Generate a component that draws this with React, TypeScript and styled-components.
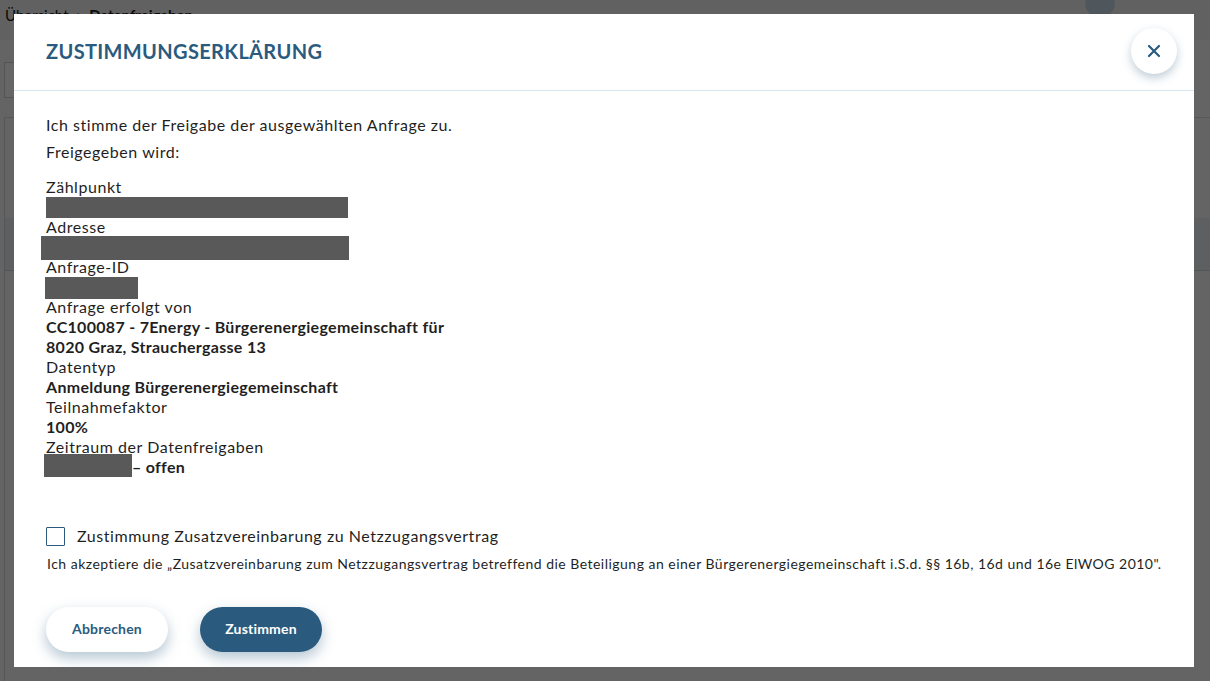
import React from "react";
import styled, { createGlobalStyle } from "styled-components";

const GlobalStyle = createGlobalStyle`
  html, body { margin: 0; padding: 0; }
  body {
    font-family: Lato, "Open Sans", "Liberation Sans", sans-serif;
    color: #1f1f1f;
    background: #ffffff;
    width: 1210px;
    height: 681px;
    overflow: hidden;
  }
  * { box-sizing: border-box; }
`;

const brand = "#2a5b7e";

/* ---------- background page ---------- */
const Page = styled.div`
  width: 1210px;
  height: 681px;
  display: flex;
  flex-direction: column;
  background: #fbfbfb;
`;

const TopBar = styled.header`
  height: 40px;
  flex: none;
  display: flex;
  align-items: flex-start;
  justify-content: space-between;
  padding: 4px 20px 0 5px;
  background: #f3f3f3;
`;

const Crumbs = styled.nav`
  display: flex;
  align-items: center;
  gap: 8px;
  font-size: 15px;
  color: #1a1a1a;
`;

const Crumb = styled.span<{ $current?: boolean }>`
  font-weight: ${(p) => (p.$current ? 700 : 400)};
`;

const Chevron = styled.span`
  color: ${brand};
  font-size: 17px;
`;

const Avatar = styled.div`
  width: 30px;
  height: 30px;
  border-radius: 50%;
  background: #c9d9e6;
  margin: -16px 75px 0 0;
`;

const PageBody = styled.main`
  flex: 1;
  display: flex;
  flex-direction: column;
  padding: 22px 0 0 4px;
`;

const FilterBox = styled.div`
  width: 300px;
  height: 36px;
  border: 1px solid #cfcfcf;
  background: #fff;
`;

const Divider = styled.div`
  height: 1px;
  background: #dcdcdc;
  margin-top: 19px;
`;

const TableArea = styled.div`
  flex: 1;
  border-left: 1px solid #d8d8d8;
  display: flex;
  flex-direction: column;
  padding-top: 100px;
`;

const TableHead = styled.div`
  height: 53px;
  background: #e9eef2;
  border-bottom: 1px solid #d0d6da;
`;

/* ---------- modal ---------- */
const Overlay = styled.div`
  position: fixed;
  inset: 0;
  background: rgba(0, 0, 0, 0.6);
  display: flex;
  padding: 14px 16px 14px 14px;
`;

const Modal = styled.section`
  flex: 1;
  background: #ffffff;
  display: flex;
  flex-direction: column;
  overflow: hidden;
`;

const Header = styled.div`
  flex: none;
  height: 77px;
  border-bottom: 1px solid #d6e4ed;
  display: flex;
  align-items: center;
  justify-content: space-between;
  padding: 0 17px 3px 32px;
`;

const Title = styled.h2`
  margin: 0;
  font-size: 20px;
  font-weight: 700;
  color: ${brand};
  letter-spacing: 0.35px;
`;

const CloseButton = styled.button`
  width: 46px;
  height: 46px;
  border-radius: 50%;
  border: none;
  background: #fff;
  box-shadow: 0 4px 10px rgba(42, 91, 126, 0.3);
  display: flex;
  align-items: center;
  justify-content: center;
  padding: 0;
  cursor: pointer;
`;

const Body = styled.div`
  flex: 1;
  min-height: 0;
  display: flex;
  flex-direction: column;
  padding: 20px 30px 15px 32px;
  letter-spacing: 0.55px;
`;

const Intro = styled.p`
  margin: 0;
  font-size: 16px;
  line-height: 27px;
`;

const Details = styled.div`
  margin-top: 12px;
  display: flex;
  flex-direction: column;
  font-size: 16px;
  line-height: 20px;
`;

const Label = styled.div``;

const Value = styled.div`
  font-weight: 700;
  letter-spacing: 0.3px;
  display: flex;
  align-items: center;
`;

const Redaction = styled.span<{ $w: number; $h: number; $dx?: number; $dy?: number }>`
  display: block;
  flex: none;
  background: #595959;
  width: ${(p) => p.$w}px;
  height: ${(p) => p.$h}px;
  margin-left: ${(p) => p.$dx ?? 0}px;
  margin-top: ${(p) => p.$dy ?? 0}px;
  margin-bottom: ${(p) => 20 - p.$h - (p.$dy ?? 0)}px;
`;

const CheckRow = styled.label`
  margin-top: 49px;
  display: flex;
  align-items: center;
  gap: 12px;
  font-size: 16px;
  line-height: 20px;
  cursor: pointer;
`;

const CheckBox = styled.span`
  width: 19px;
  height: 19px;
  border: 1.5px solid ${brand};
  border-radius: 1px;
  background: #fff;
`;

const Accept = styled.p`
  margin: 8px 0 0 1px;
  font-size: 14px;
  line-height: 20px;
  letter-spacing: 0.48px;
  white-space: nowrap;
`;

const Actions = styled.div`
  margin-top: 33px;
  display: flex;
  gap: 32px;
`;

const Button = styled.button<{ $primary?: boolean }>`
  width: 122px;
  height: 45px;
  border-radius: 23px;
  border: none;
  padding: 0 0 3px;
  font-family: inherit;
  font-size: 14px;
  font-weight: 700;
  letter-spacing: 0.2px;
  cursor: pointer;
  color: ${(p) => (p.$primary ? "#ffffff" : brand)};
  background: ${(p) => (p.$primary ? brand : "#ffffff")};
  box-shadow: 0 6px 14px rgba(42, 91, 126, 0.35);
`;

const CloseIcon = () => (
  <svg width="14" height="14" viewBox="0 0 14 14" fill="none">
    <path d="M2 2L12 12M12 2L2 12" stroke={brand} strokeWidth="2.2" strokeLinecap="round" />
  </svg>
);

export default function App() {
  return (
    <>
      <GlobalStyle />
      <Page>
        <TopBar>
          <Crumbs>
            <Crumb>Übersicht</Crumb>
            <Chevron>›</Chevron>
            <Crumb $current>Datenfreigaben</Crumb>
          </Crumbs>
          <Avatar />
        </TopBar>
        <PageBody>
          <FilterBox />
          <Divider />
          <TableArea>
            <TableHead />
          </TableArea>
        </PageBody>
      </Page>
      <Overlay>
        <Modal role="dialog" aria-modal="true">
          <Header>
            <Title>ZUSTIMMUNGSERKLÄRUNG</Title>
            <CloseButton aria-label="Schließen">
              <CloseIcon />
            </CloseButton>
          </Header>
          <Body>
            <Intro>Ich stimme der Freigabe der ausgewählten Anfrage zu.</Intro>
            <Intro>Freigegeben wird:</Intro>
            <Details>
              <Label>Zählpunkt</Label>
              <Redaction $w={302} $h={21} />
              <Label>Adresse</Label>
              <Redaction $w={308} $h={24} $dx={-5} $dy={-1} />
              <Label>Anfrage-ID</Label>
              <Redaction $w={93} $h={22} $dx={-1} />
              <Label>Anfrage erfolgt von</Label>
              <Value>CC100087 - 7Energy - Bürgerenergiegemeinschaft für</Value>
              <Value>8020 Graz, Strauchergasse 13</Value>
              <Label>Datentyp</Label>
              <Value>Anmeldung Bürgerenergiegemeinschaft</Value>
              <Label>Teilnahmefaktor</Label>
              <Value>100%</Value>
              <Label>Zeitraum der Datenfreigaben</Label>
              <Value>
                <Redaction $w={88} $h={23} $dx={-2} $dy={-3} />– offen
              </Value>
            </Details>
            <CheckRow>
              <CheckBox />
              Zustimmung Zusatzvereinbarung zu Netzzugangsvertrag
            </CheckRow>
            <Accept>
              Ich akzeptiere die „Zusatzvereinbarung zum Netzzugangsvertrag betreffend die Beteiligung an einer
              Bürgerenergiegemeinschaft i.S.d. §§ 16b, 16d und 16e ElWOG 2010".
            </Accept>
            <Actions>
              <Button>Abbrechen</Button>
              <Button $primary>Zustimmen</Button>
            </Actions>
          </Body>
        </Modal>
      </Overlay>
    </>
  );
}
